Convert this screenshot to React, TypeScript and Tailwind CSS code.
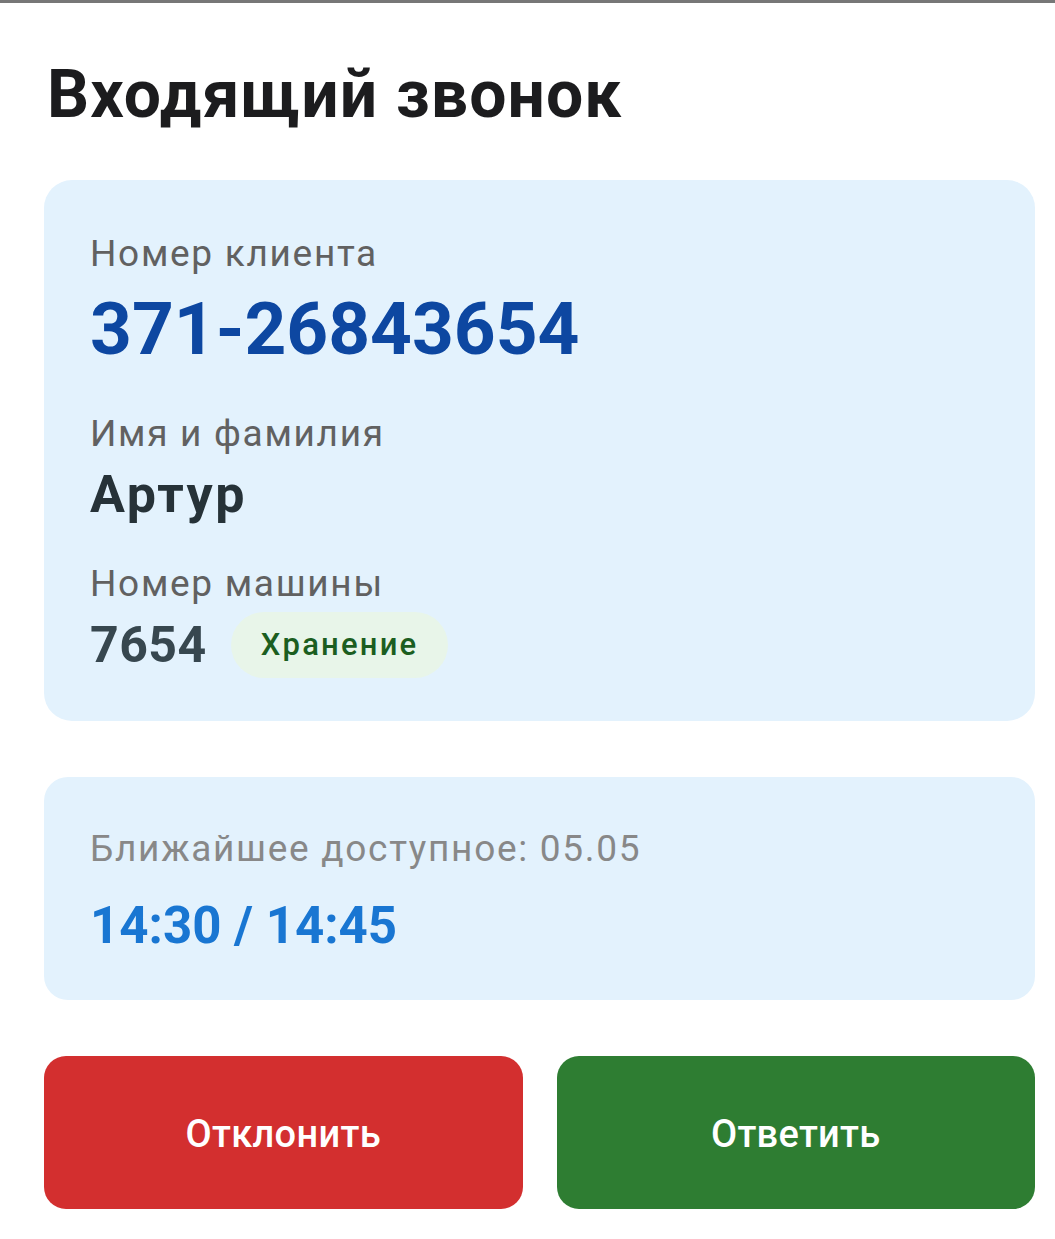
const font = { fontFamily: 'Roboto, "Noto Sans", sans-serif' };

function Label({ children, className = '' }: { children: React.ReactNode; className?: string }) {
  return <p className={`text-[37px] leading-[44px] text-[#616161] tracking-[1.7px] ${className}`}>{children}</p>;
}

export default function App() {
  return (
    <div className="min-h-[1239px] bg-white" style={font}>
      <div className="h-[3px] bg-[#777777]" />

      <div className="pl-[44px] pr-[20px]">
        <h1 className="pt-[52px] pl-[3px] text-[66px] leading-[80px] font-bold text-[#1c1c1e] tracking-[1.1px]">
          Входящий звонок
        </h1>

        {/* Caller info */}
        <section className="mt-[45px] rounded-[28px] bg-[#e3f2fd] px-[46px] pt-[52px] pb-[43px]">
          <Label>Номер клиента</Label>
          <p className="mt-[10px] text-[73px] leading-[86px] font-bold text-[#0d47a1]">371-26843654</p>

          <Label className="mt-[40px]">Имя и фамилия</Label>
          <p className="mt-[9px] text-[52px] leading-[60px] font-bold text-[#263238] tracking-[2.6px]">Артур</p>

          <Label className="mt-[37px]">Номер машины</Label>
          <div className="mt-[6px] flex items-center gap-[24px]">
            <span className="text-[50px] leading-[66px] font-bold text-[#37474f] tracking-[0.5px]">7654</span>
            <span className="h-[66px] flex items-center rounded-full bg-[#e8f5e9] pl-[30px] pr-[30px] text-[31px] font-medium text-[#1b5e20] tracking-[2.2px]">
              Хранение
            </span>
          </div>
        </section>

        {/* Nearest slot */}
        <section className="mt-[56px] rounded-[24px] bg-[#e3f2fd] px-[46px] pt-[50px] pb-[44px]">
          <p className="text-[37px] leading-[44px] text-[#888888] tracking-[1.7px]">Ближайшее доступное: 05.05</p>
          <p className="mt-[25px] text-[51px] leading-[60px] font-bold text-[#1976d2]">14:30 / 14:45</p>
        </section>

        {/* Actions */}
        <div className="mt-[56px] grid grid-cols-2 gap-[34px]">
          <button className="h-[153px] rounded-[22px] bg-[#d32f2f] pt-[4px] text-white text-[38px] font-medium tracking-[0.3px]">
            Отклонить
          </button>
          <button className="h-[153px] rounded-[22px] bg-[#2e7d32] pt-[4px] text-white text-[38px] font-medium tracking-[0.3px]">
            Ответить
          </button>
        </div>
      </div>
    </div>
  );
}
